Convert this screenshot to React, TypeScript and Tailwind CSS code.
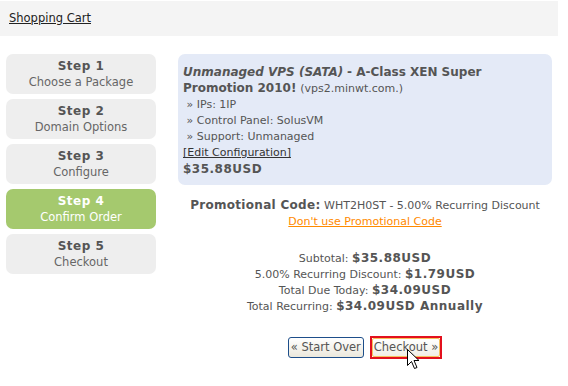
const steps = [
  { n: 1, label: "Choose a Package" },
  { n: 2, label: "Domain Options" },
  { n: 3, label: "Configure" },
  { n: 4, label: "Confirm Order", active: true },
  { n: 5, label: "Checkout" },
];

function Cursor() {
  return (
    <svg width="13" height="21" viewBox="0 0 13 21" className="absolute left-[35px] top-[11px]">
      <path
        d="M0.5 0.5 L0.5 16.5 L4.5 12.5 L7.5 19.5 L10 18.5 L7 11.5 L12 11.5 Z"
        fill="#fff"
        stroke="#000"
        strokeWidth="1"
      />
    </svg>
  );
}

export default function App() {
  return (
    <div className="w-[568px] h-[386px] bg-white font-['DejaVu_Sans',sans-serif] text-[11px] text-[#555]">
      {/* breadcrumb bar */}
      <div className="mt-px h-[35px] w-[558px] bg-[#f4f4f4] pl-[9px] flex items-center">
        <a className="underline text-[#222] text-[11.5px] leading-none">Shopping Cart</a>
      </div>

      <div className="flex gap-[22px] pl-[6px] mt-[18px]">
        {/* steps */}
        <div className="w-[150px] flex flex-col gap-[5px]">
          {steps.map((s) => (
            <div
              key={s.n}
              className={`h-[40px] rounded-[7px] flex flex-col items-center justify-center leading-[16px] ${
                s.active ? "bg-[#a5c96e] text-white" : "bg-[#eeeeee] text-[#666]"
              }`}
            >
              <span className={`font-bold text-[12px] tracking-[0.5px] ${s.active ? "text-white" : "text-[#555]"}`}>
                Step {s.n}
              </span>
              <span className="text-[11.5px]">{s.label}</span>
            </div>
          ))}
        </div>

        {/* order summary */}
        <div className="w-[374px]">
          <div className="bg-[#e4eaf7] rounded-[7px] pl-[5px] pr-2 pt-[10px] pb-[8px] leading-[16px] text-[#555]">
            <div className="text-[12px]">
              <b className="italic">Unmanaged VPS (SATA)</b> <b>- A-Class XEN Super Promotion 2010!</b>{" "}
              <span className="text-[11px]">(vps2.minwt.com.)</span>
            </div>
            <div>&nbsp;» IPs: 1IP</div>
            <div>&nbsp;» Control Panel: SolusVM</div>
            <div>&nbsp;» Support: Unmanaged</div>
            <div>
              <a className="underline text-[#333]">[Edit Configuration]</a>
            </div>
            <div className="font-bold text-[12px] tracking-[0.5px]">$35.88USD</div>
          </div>

          <div className="mt-[13px] text-center leading-[16px]">
            <div>
              <b className="text-[12px] leading-none tracking-[0.3px]">Promotional Code:</b> WHT2H0ST - 5.00% Recurring
              Discount
            </div>
            <a className="underline text-[#ff8a00]">Don't use Promotional Code</a>
          </div>

          <div className="mt-[21px] text-center leading-[16px]">
            <div>
              Subtotal: <b className="text-[12px] leading-none tracking-[0.5px]">$35.88USD</b>
            </div>
            <div>
              5.00% Recurring Discount: <b className="text-[12px] leading-none tracking-[0.5px]">$1.79USD</b>
            </div>
            <div>
              Total Due Today: <b className="text-[12px] leading-none tracking-[0.5px]">$34.09USD</b>
            </div>
            <div>
              Total Recurring: <b className="text-[12px] leading-none tracking-[0.5px]">$34.09USD Annually</b>
            </div>
          </div>

          <div className="mt-[21px] flex justify-center items-center gap-[6px]">
            <button className="h-[21px] px-[2px] border border-[#1d4e8a] rounded-[3px] bg-gradient-to-b from-white to-[#ebe8dc] text-[11.5px] text-[#555] leading-none">
              « Start Over
            </button>
            <div className="relative border-2 border-[#e3101d]">
              <button className="h-[19px] px-[1px] border border-[#f6c15c] rounded-[2px] bg-gradient-to-b from-white to-[#f1efe6] text-[11.5px] text-[#555] leading-none">
                Checkout »
              </button>
              <Cursor />
            </div>
          </div>
        </div>
      </div>
    </div>
  );
}
